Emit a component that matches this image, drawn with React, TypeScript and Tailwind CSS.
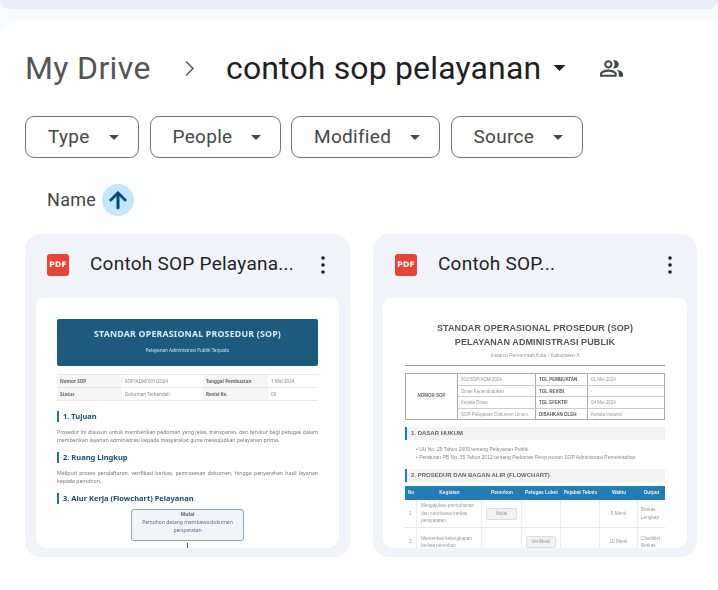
const filters = [
  { label: "Type", width: "w-[114px]" },
  { label: "People", width: "w-[131px]" },
  { label: "Modified", width: "w-[149px]" },
  { label: "Source", width: "w-[132px]" },
];

const flowCols = "grid-cols-[12px_65px_40px_39px_39px_38px_27px]";

function Caret({ className }: { className: string }) {
  return (
    <svg viewBox="0 0 10 5" className={className} fill="currentColor">
      <path d="M0 0h10L5 5z" />
    </svg>
  );
}

function SharedIcon() {
  return (
    <svg viewBox="0 0 24 24" className="ml-[33px] h-[25px] w-[25px] text-[#444746]" fill="currentColor">
      <path d="M16.67 13.13C18.04 14.06 19 15.32 19 17v3h4v-3c0-2.18-3.57-3.47-6.33-3.87zM15 12c2.21 0 4-1.79 4-4s-1.79-4-4-4c-.47 0-.91.1-1.33.24C14.5 5.27 15 6.58 15 8s-.5 2.73-1.33 3.76c.42.14.86.24 1.33.24zM9 12c2.21 0 4-1.79 4-4s-1.79-4-4-4-4 1.79-4 4 1.79 4 4 4zm0-6c1.1 0 2 .9 2 2s-.9 2-2 2-2-.9-2-2 .9-2 2-2zM9 13c-2.67 0-8 1.34-8 4v3h16v-3c0-2.66-5.33-4-8-4zm6 5H3v-.99C3.2 16.29 6.3 15 9 15s5.8 1.29 6 2v1z" />
    </svg>
  );
}

function PdfIcon() {
  return (
    <div className="flex h-[22px] w-[22px] shrink-0 items-center justify-center rounded-[3px] bg-[#ea4335] font-['DejaVu_Sans'] text-[7.5px] font-bold tracking-[0.2px] text-white">
      PDF
    </div>
  );
}

function MoreDots() {
  return (
    <svg viewBox="0 0 4 18" className="h-[18px] w-[4px] text-[#1f1f1f]" fill="currentColor">
      <circle cx="2" cy="2" r="1.8" />
      <circle cx="2" cy="9" r="1.8" />
      <circle cx="2" cy="16" r="1.8" />
    </svg>
  );
}

function CardHeader({ title }: { title: string }) {
  return (
    <div className="flex h-[63px] items-center pb-[2px] pl-[22px] pr-[25px]">
      <PdfIcon />
      <div className="ml-[21px] flex-1 truncate pb-[2px] text-[19px] leading-6 tracking-[0.25px] text-[#1f1f1f]">{title}</div>
      <MoreDots />
    </div>
  );
}

function SopHeading({ children }: { children: string }) {
  return (
    <div className="border-l-2 border-[#2a6f8f] pl-[4px] text-[7.5px] font-bold leading-[11px] text-[#1d4a68]">
      {children}
    </div>
  );
}

function PreviewOne() {
  const rows = [
    ["Nomor SOP", "SOP/ADM/001/2024", "Tanggal Pembuatan", "1 Mei 2024"],
    ["Status", "Dokumen Terkendali", "Revisi Ke.", "00"],
  ];
  return (
    <div className="mx-[11px] mt-px h-[250px] overflow-hidden rounded-t-lg rounded-b-[10px] bg-white px-[21px] pt-[21px] font-['Noto_Sans'] blur-[0.4px]">
      <div className="flex h-[47px] flex-col items-center justify-center rounded-[2px] bg-[#1c5a80] pb-[3px] text-white">
        <div className="text-[8.8px] font-bold leading-3 tracking-[0.2px] text-[#dcebf4]">STANDAR OPERASIONAL PROSEDUR (SOP)</div>
        <div className="mt-[7px] text-[4.6px] leading-[7px] text-[#d3e3ee]">Pelayanan Administrasi Publik Terpadu</div>
      </div>
      <div className="mt-2 border-t border-[#e5e7eb]">
        {rows.map((r) => (
          <div key={r[0]} className="grid h-[13px] grid-cols-[65px_81px_65px_49px] border-b border-[#e5e7eb] text-[4.6px] leading-[12px] text-[#888]">
            <div className="bg-[#f5f5f5] pl-[3px] font-bold text-[#666]">{r[0]}</div>
            <div className="pl-[3px]">{r[1]}</div>
            <div className="bg-[#f5f5f5] pl-[3px] font-bold text-[#666]">{r[2]}</div>
            <div className="pl-[3px]">{r[3]}</div>
          </div>
        ))}
      </div>
      <div className="mt-[10px]">
        <SopHeading>1. Tujuan</SopHeading>
      </div>
      <p className="mt-[6px] text-justify text-[5.2px] leading-[8px] text-[#777]">
        Prosedur ini disusun untuk memberikan pedoman yang jelas, transparan, dan terukur bagi petugas dalam memberikan layanan administrasi kepada masyarakat guna mewujudkan pelayanan prima.
      </p>
      <div className="mt-[8px]">
        <SopHeading>2. Ruang Lingkup</SopHeading>
      </div>
      <p className="mt-[6px] text-justify text-[5.2px] leading-[8px] text-[#777]">
        Meliputi proses pendaftaran, verifikasi berkas, pemrosesan dokumen, hingga penyerahan hasil layanan kepada pemohon.
      </p>
      <div className="mt-[8px]">
        <SopHeading>3. Alur Kerja (Flowchart) Pelayanan</SopHeading>
      </div>
      <div className="mx-auto mt-[5px] h-[32px] w-[113px] rounded-[3px] border border-[#8fa3b3] bg-[#eef6fa] text-center text-[5px] leading-[8px] text-[#667]">
        <div className="font-bold">Mulai</div>
        <div className="px-[6px]">Pemohon datang membawa dokumen persyaratan</div>
      </div>
      <div className="mx-auto mt-[2px] h-[5px] w-px bg-[#555]" />
    </div>
  );
}

function PreviewTwo() {
  const info = [
    ["001/SOP/ADM/2024", "TGL PEMBUATAN", "01 Mei 2024"],
    ["Dinas Kependudukan", "TGL REVISI", "-"],
    ["Kepala Dinas", "TGL EFEKTIF", "04 Mei 2024"],
    ["SOP Pelayanan Dokumen Umum", "DISAHKAN OLEH", "Kepala Instansi"],
  ];
  const headers = ["No", "Kegiatan", "Pemohon", "Petugas Loket", "Pejabat Teknis", "Waktu", "Output"];
  return (
    <div className="mx-[10px] mt-px h-[250px] overflow-hidden rounded-t-lg rounded-b-[10px] bg-white px-[22px] pt-[23px] font-['Liberation_Sans'] blur-[0.4px]">
      <div className="text-center text-[9px] font-bold leading-[14px] tracking-[0.1px] text-[#555]">
        <div>STANDAR OPERASIONAL PROSEDUR (SOP)</div>
        <div>PELAYANAN ADMINISTRASI PUBLIK</div>
      </div>
      <div className="text-center text-[5px] leading-[12px] text-[#999]">Instansi Pemerintah Kota / Kabupaten X</div>
      <div className="mt-[4px] h-px bg-[#999]" />
      <div className="mt-[7px] flex h-[47px] border border-[#aaa] text-[4.5px] text-[#999]">
        <div className="flex w-[52px] items-center justify-center border-r border-[#aaa] font-bold text-[#666]">NOMOR SOP</div>
        <div className="flex-1">
          {info.map((r) => (
            <div key={r[0]} className="grid h-[11.5px] grid-cols-[78px_52px_1fr] border-b border-[#ccc] leading-[11px] last:border-b-0">
              <div className="border-r border-[#aaa] pl-[3px]">{r[0]}</div>
              <div className="border-r border-[#aaa] pl-[3px] font-bold text-[#555]">{r[1]}</div>
              <div className="pl-[3px]">{r[2]}</div>
            </div>
          ))}
        </div>
      </div>
      <div className="mt-[7px] h-[13px] border-l-2 border-[#1f7fb5] bg-[#f3f3f3] pl-[4px] text-[6px] font-bold leading-[13px] text-[#666]">1. DASAR HUKUM</div>
      <ul className="mt-[5px] pl-[11px] text-[5px] leading-[8px] text-[#888]">
        <li>• UU No. 25 Tahun 2009 tentang Pelayanan Publik</li>
        <li>• Peraturan PB No. 35 Tahun 2012 tentang Pedoman Penyusunan SOP Administrasi Pemerintahan</li>
      </ul>
      <div className="mt-[8px] h-[13px] border-l-2 border-[#1f7fb5] bg-[#f3f3f3] pl-[4px] text-[6px] font-bold leading-[13px] text-[#666]">2. PROSEDUR DAN BAGAN ALIR (FLOWCHART)</div>
      <div className={`mt-[4px] grid h-[14px] ${flowCols} bg-[#1f7fb5] text-center text-[4.8px] font-bold leading-[14px] text-[#e3f1f8]`}>
        {headers.map((h) => (
          <div key={h}>{h}</div>
        ))}
      </div>
      <div className={`grid h-[28px] ${flowCols} items-stretch divide-x divide-[#eee] border-b border-[#e5e5e5] text-[4.7px] leading-[7.5px] text-[#999]`}>
        <div className="flex items-center justify-center">1</div>
        <div className="flex items-center pl-[4px] pr-[3px]">Mengajukan permohonan dan membawa berkas persyaratan</div>
        <div className="flex items-center px-[4px]">
          <div className="h-[12px] w-full rounded-[2px] border border-[#ddd] bg-[#f2f2f2] text-center leading-[10px]">Mulai</div>
        </div>
        <div />
        <div />
        <div className="flex items-center justify-center">5 Menit</div>
        <div className="flex items-center pl-[3px]">Berkas Lengkap</div>
      </div>
      <div className={`grid h-[28px] ${flowCols} items-stretch divide-x divide-[#eee] text-[4.7px] leading-[7.5px] text-[#999]`}>
        <div className="flex items-center justify-center">2</div>
        <div className="flex items-center pl-[4px] pr-[3px]">Memeriksa kelengkapan berkas pemohon</div>
        <div />
        <div className="flex items-center px-[4px]">
          <div className="h-[12px] w-full rounded-[2px] border border-[#ddd] bg-[#f2f2f2] text-center leading-[10px]">Verifikasi</div>
        </div>
        <div />
        <div className="flex items-center justify-center">10 Menit</div>
        <div className="flex items-center pl-[3px]">Checklist Berkas</div>
      </div>
    </div>
  );
}

export default function App() {
  return (
    <div className="h-[590px] w-[718px] overflow-hidden bg-[#f8fafd] font-['Roboto',sans-serif]">
      <div className="h-[9px] rounded-b-[10px] bg-[#e9eef6]" />
      <div className="mt-[11px] h-[570px] rounded-tl-[20px] bg-white pl-[25px]">
        <div className="flex h-[96px] items-center text-[#1f1f1f]">
          <span className="w-[126px] whitespace-nowrap text-[32px] leading-10 tracking-[0.35px] text-[#555]">My Drive</span>
          <svg viewBox="0 0 12 17" className="ml-[33px] h-[17px] w-[12px] text-[#5f6368]" fill="none" stroke="currentColor" strokeWidth="1.7">
            <path d="M2 1.5l7 7-7 7" />
          </svg>
          <span className="ml-[30px] text-[32px] leading-10 tracking-[0.15px]">contoh sop pelayanan</span>
          <Caret className="ml-[12px] h-[6px] w-[13px]" />
          <SharedIcon />
        </div>
        <div className="flex gap-[10.5px]">
          {filters.map((f) => (
            <div key={f.label} className={`flex h-[42px] ${f.width} items-center justify-between rounded-[9px] border border-[#747775] pl-[22px] pr-[19px] text-[19px] tracking-[0.3px] text-[#444746]`}>
              <span>{f.label}</span>
              <Caret className="h-[5px] w-[10px] text-[#444746]" />
            </div>
          ))}
        </div>
        <div className="mt-[26px] flex h-[32px] items-center pl-[22px] text-[18px] tracking-[0.3px] text-[#444746]">
          <span className="pb-[2px]">Name</span>
          <div className="ml-[6px] flex h-[32px] w-[32px] items-center justify-center rounded-full bg-[#c2e7ff]">
            <svg viewBox="0 0 24 24" className="h-[26px] w-[26px] text-[#004a77]" fill="currentColor" stroke="currentColor" strokeWidth="0.7">
              <path d="M4 12l1.41 1.41L11 7.83V20h2V7.83l5.58 5.59L20 12l-8-8-8 8z" />
            </svg>
          </div>
        </div>
        <div className="mt-[18px] flex gap-[23px]">
          <div className="h-[323px] w-[325px] rounded-[16px] bg-[#f0f4f9]">
            <CardHeader title="Contoh SOP Pelayana..." />
            <PreviewOne />
          </div>
          <div className="h-[323px] w-[324px] rounded-[16px] bg-[#f0f4f9]">
            <CardHeader title="Contoh SOP..." />
            <PreviewTwo />
          </div>
        </div>
      </div>
    </div>
  );
}
